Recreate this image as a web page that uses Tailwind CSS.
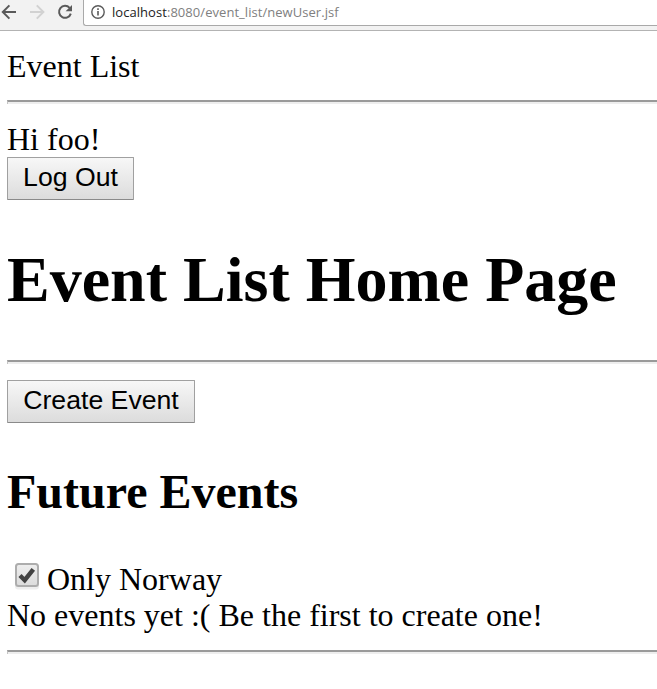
<!DOCTYPE html>
<html lang="en">
<head>
<meta charset="utf-8">
<title>Event List</title>
<script src="https://cdn.jsdelivr.net/npm/@tailwindcss/browser@4"></script>
</head>
<body class="bg-white text-black overflow-hidden">
<header class="flex h-[31px] border-b border-[#b3b3b3] bg-[#f2f2f2]">
  <div class="flex w-[83px] shrink-0">
    <svg class="h-[26px] w-[83px]" viewBox="0 0 83 26" fill="none" stroke-width="2">
      <path d="M16 12H3.4M9.4 5.4L2.8 12L9.4 18.6" stroke="#5a5a5a"/>
      <path d="M30 12H43M36.8 5.4L43.4 12L36.8 18.6" stroke="#d2d2d2"/>
      <path d="M69.6 7.9A6 6 0 1 0 70.8 13.6" stroke="#5a5a5a"/>
      <path d="M72 5V11.2H65.6Z" fill="#5a5a5a"/>
    </svg>
  </div>
  <div class="flex h-[26px] flex-1 items-center rounded-bl-[3px] border-b border-l border-[#a9a9a9] bg-white pl-[7px]">
    <svg class="-mt-px h-4 w-4 shrink-0" viewBox="0 0 16 16" fill="none" stroke="#5a5a5a">
      <circle cx="7" cy="8" r="6.2" stroke-width="1.4"/>
      <path d="M7 7V11.5M7 4.3V6" stroke-width="1.6"/>
    </svg>
    <div class="ml-[5px] pb-[2px] whitespace-nowrap font-['Open_Sans','Noto_Sans',sans-serif] text-[13px] leading-4 tracking-[0.05px] text-[#808080]"><span class="text-[#222]">localhost</span>:8080/event_list/newUser.jsf</div>
  </div>
</header>
<main class="pl-[7px] font-['Liberation_Serif',serif] text-[32px] leading-[37px]">
  <div class="pt-[17px]">Event List</div>
  <hr class="mt-[15px] h-1 border-0 border-t-2 border-l border-[#9a9a9a] border-l-[#c4c4c4] bg-[#eee]">
  <div class="mt-[17px] -mb-px">Hi foo!</div>
  <button class="block h-[43px] w-[127px] rounded-[1px] border border-[#a0a0a0] border-b-[#8a8a8a] bg-linear-to-b from-[#f7f7f7] to-[#dcdcdc] pb-[2px] font-['Liberation_Sans',sans-serif] text-[26.67px] leading-[39px]">Log Out</button>
  <h1 class="mt-[43px] text-[64px] leading-[74px] font-bold whitespace-nowrap">Event List Home Page</h1>
  <hr class="mt-[43px] h-1 border-0 border-t-2 border-l border-[#9a9a9a] border-l-[#c4c4c4] bg-[#eee]">
  <button class="mt-4 block h-[43px] w-[188px] rounded-[1px] border border-[#a0a0a0] border-b-[#8a8a8a] bg-linear-to-b from-[#f7f7f7] to-[#dcdcdc] pb-[2px] font-['Liberation_Sans',sans-serif] text-[26.67px] leading-[39px]">Create Event</button>
  <h2 class="mt-[41px] text-[48px] leading-[56px] font-bold">Future Events</h2>
  <label class="mt-[41px] flex h-[37px]">
    <svg class="mt-[2px] ml-[7px] h-[27px] w-[26px] shrink-0" viewBox="0 0 26 27">
      <defs><linearGradient id="box" x2="0" y2="1"><stop stop-color="#eeeeee"/><stop offset="1" stop-color="#dcdcdc"/></linearGradient></defs>
      <rect x="1" y="2" width="24" height="24.5" rx="3" fill="#eeeeee"/>
      <rect x="2" y="1" width="22" height="22" rx="2.5" fill="url(#box)" stroke="#adadad" stroke-width="2"/>
      <path d="M6 12.5L10.7 17.2L19.3 6.3" fill="none" stroke="#424242" stroke-width="4.4"/>
    </svg>
    <span class="ml-[7px]">Only Norway</span>
  </label>
  <div class="-mt-px">No events yet :( Be the first to create one!</div>
  <hr class="mt-4 h-1 border-0 border-t-2 border-l border-[#9a9a9a] border-l-[#c4c4c4] bg-[#eee]">
</main>
</body>
</html>
